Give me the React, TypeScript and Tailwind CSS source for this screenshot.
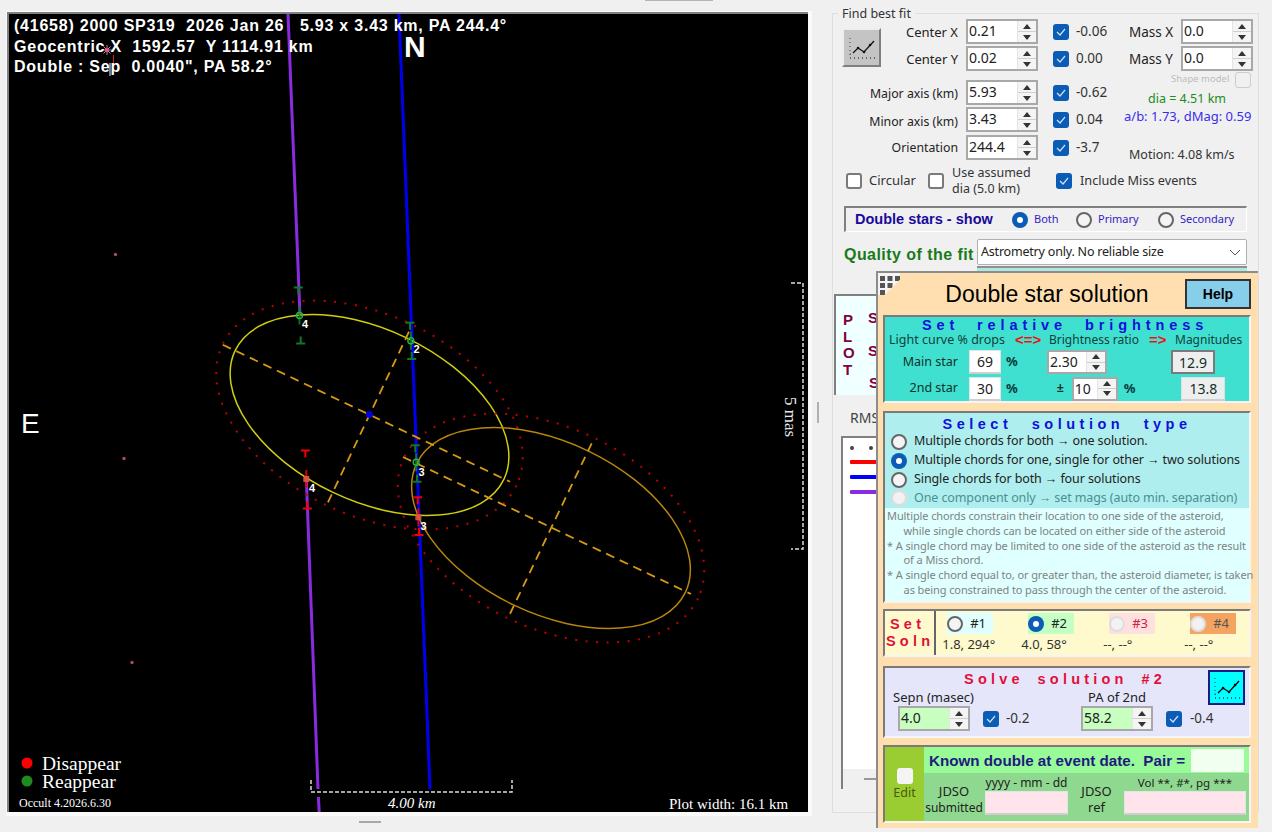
import React from "react";

const ui = "font-['Noto_Sans',sans-serif]";
const arial = "font-['Liberation_Sans',sans-serif]";
const serif = "font-['Liberation_Serif',serif]";

function Spin({ value, w = "w-[72px]", bg = "bg-white", h = "h-[25px]" }: { value: string; w?: string; bg?: string; h?: string }) {
  return (
    <div className={`${w} ${h} ${bg} flex border-2 border-[#a8a8a8] shrink-0`}>
      <div className="flex-1 pl-[1px] text-[14px] leading-[19px] text-[#222]">{value}</div>
      <div className="w-[19px] flex flex-col bg-[#f4f4f4] border-l border-[#e4e4e4]">
        <div className="flex-1 flex items-center justify-center border-b border-[#cfcfcf]">
          <div className="w-0 h-0 border-l-[4px] border-r-[4px] border-b-[5px] border-l-transparent border-r-transparent border-b-[#333]" />
        </div>
        <div className="flex-1 flex items-center justify-center">
          <div className="w-0 h-0 border-l-[4px] border-r-[4px] border-t-[5px] border-l-transparent border-r-transparent border-t-[#333]" />
        </div>
      </div>
    </div>
  );
}

function Check({ on = true, cls = "" }: { on?: boolean; cls?: string }) {
  if (!on)
    return <div className={`w-[16px] h-[16px] rounded-[3px] border-2 border-[#7a7a7a] bg-white shrink-0 ${cls}`} />;
  return (
    <div className={`w-[16px] h-[16px] rounded-[3px] bg-[#0a5cb4] flex items-center justify-center shrink-0 ${cls}`}>
      <svg width="10" height="8" viewBox="0 0 10 8">
        <path d="M1 4 L4 7 L9 1" fill="none" stroke="#cfe2f6" strokeWidth="1.2" />
      </svg>
    </div>
  );
}

function Radio({ on = false, dim = false }: { on?: boolean; dim?: boolean }) {
  if (on)
    return (
      <div className="w-[16px] h-[16px] rounded-full bg-[#0a5cb4] flex items-center justify-center shrink-0">
        <div className="w-[6px] h-[6px] rounded-full bg-white" />
      </div>
    );
  return (
    <div
      className={`w-[16px] h-[16px] rounded-full shrink-0 border-2 ${
        dim ? "border-[#dddddd] bg-[#f2f2f2]" : "border-[#666] bg-[#f4f4f4]"
      }`}
    />
  );
}

function ChartIcon({ dot = "#444", line = "#111" }: { dot?: string; line?: string }) {
  return (
    <svg width="30" height="26" viewBox="0 0 30 26">
      <path d="M3 3 V23 H28" fill="none" stroke={dot} strokeWidth="1" strokeDasharray="1 3" />
      <path d="M3 23 H28 M3 19 H4" fill="none" stroke={dot} strokeWidth="1" strokeDasharray="1 3" />
      <path d="M6 18 L11 13 L17 17 L27 6" fill="none" stroke={line} strokeWidth="1.3" />
      <path d="M11 13h.1M17 17h.1M23 10h.1" stroke={line} strokeWidth="2.5" strokeLinecap="round" />
    </svg>
  );
}

function Chord({ x1, x2, y1, y2, y3, c, marker }: { x1: number; x2: number; y1: number; y2: number; y3: number; c: string; marker: "c" | "s" }) {
  const mid = (x1 + x2) / 2;
  return (
    <g>
      <path d={`M${x1 - 4.5} ${y1} H${x1 + 4.5}`} stroke={c} strokeWidth="2" />
      <path d={`M${x1} ${y1} V${y1 + 7}`} stroke={c} strokeWidth="2" />
      <path d={`M${x2 - 4.5} ${y3} H${x2 + 4.5}`} stroke={c} strokeWidth="2" />
      <path d={`M${x2} ${y3} V${y3 - 7}`} stroke={c} strokeWidth="2" />
      <path d={`M${mid} ${y2 - 9} V${y2 + 9}`} stroke={c} strokeWidth="2" opacity="0.9" />
      {marker === "c" ? (
        <circle cx={mid} cy={y2} r="3" fill="none" stroke="#22b83a" strokeWidth="1.4" />
      ) : (
        <rect x={mid - 3} y={y2 - 3} width="6" height="6" fill="#e05a40" opacity="0.9" />
      )}
    </g>
  );
}

function Plot() {
  const num = "fill-white text-[11px] font-bold";
  return (
    <div className="relative w-[799px] h-[798px] bg-black overflow-hidden">
      <svg className="absolute inset-0" width="799" height="798" viewBox="9 14 799 798">
        {/* chords */}
        <path d="M288 14 L300 316" stroke="#8a2be2" strokeWidth="3" fill="none" />
        <path d="M306.4 480 L318 789 M318.4 797 L319.2 812" stroke="#8a2be2" strokeWidth="3" fill="none" />
        <path d="M399 14 L430 789" stroke="#0000f0" strokeWidth="3" fill="none" />
        {/* outlines */}
        <g transform="rotate(25.6 369.5 415)">
          <ellipse cx="369.5" cy="415" rx="149" ry="85.6" fill="none" stroke="#cfcf10" strokeWidth="1.5" />
          <ellipse cx="369.5" cy="415" rx="163" ry="100" fill="none" stroke="#c00000" strokeWidth="2" strokeDasharray="2 8.5" />
        </g>
        <g transform="rotate(25.6 551 528)">
          <ellipse cx="551" cy="528" rx="149" ry="85.6" fill="none" stroke="#b8860b" strokeWidth="1.5" />
          <ellipse cx="551" cy="528" rx="163" ry="100" fill="none" stroke="#c00000" strokeWidth="2" strokeDasharray="2 8.5" />
        </g>
        <g stroke="#d89a10" strokeWidth="1.8" strokeDasharray="9 6" fill="none">
          <path d="M222.7 344.7 L510 481.7" />
          <path d="M409 331.7 L326.7 505" />
          <path d="M403 457 L691 594" />
          <path d="M591.7 443.3 L508 618" />
        </g>
        <circle cx="369.5" cy="414.5" r="3.5" fill="#0000e0" />

        {/* events */}
        <Chord x1={298.3} x2={300.7} y1={287.5} y2={315.5} y3={343.5} c="#0f7a26" marker="c" />
        <Chord x1={410} x2={411.7} y1={322.7} y2={340.7} y3={359} c="#0f7a26" marker="c" />
        <Chord x1={415.3} x2={417} y1={445.3} y2={462.3} y3={481.7} c="#0f7a26" marker="c" />
        <Chord x1={305.3} x2={307.3} y1={450.5} y2={479} y3={508.5} c="#f00000" marker="s" />
        <Chord x1={417.7} x2={419} y1={497.3} y2={517.3} y3={535} c="#f00000" marker="s" />
        <text x="302" y="328" className={`${num} ${arial}`}>4</text>
        <text x="413.5" y="353" className={`${num} ${arial}`}>2</text>
        <text x="418.5" y="476" className={`${num} ${arial}`}>3</text>
        <text x="309" y="492" className={`${num} ${arial}`}>4</text>
        <text x="420.5" y="530" className={`${num} ${arial}`}>3</text>

        {/* stars */}
        <circle cx="115.5" cy="254.5" r="1.7" fill="#a84a6a" />
        <circle cx="124" cy="458.5" r="1.7" fill="#a84a6a" />
        <circle cx="132" cy="662.5" r="1.7" fill="#a84a6a" />
        <path d="M102 50 H112 M107 45 V55 M103.5 46.5 L110.5 53.5 M110.5 46.5 L103.5 53.5" stroke="#b9859c" strokeWidth="1" />
        <circle cx="107" cy="50" r="1.8" fill="#ff4f9a" />
        <path d="M113.5 55 V63" stroke="#e02020" strokeWidth="1" />
        <path d="M110 63 V76" stroke="#f0f0ff" strokeWidth="1" />

        {/* scale brackets */}
        <path d="M311 780 V792 H512 V780" fill="none" stroke="#ddd" strokeWidth="1.5" strokeDasharray="4 2" />
        <path d="M791 283 H803 V549 H791" fill="none" stroke="#ddd" strokeWidth="1.5" strokeDasharray="4 2" />
        <circle cx="27" cy="763" r="5.5" fill="#ff0000" />
        <circle cx="27" cy="781" r="5.5" fill="#1f8a1f" />
      </svg>

      <div className={`absolute left-[5px] top-[2px] text-white text-[16px] font-bold leading-[20.7px] whitespace-pre tracking-[0.77px] ${arial}`}>
        <div className="w-fit">(41658) 2000 SP319  2026 Jan 26   5.93 x 3.43 km, PA 244.4°</div>
        <div className="w-fit">Geocentric X  1592.57  Y 1114.91 km</div>
        <div className="w-fit">Double : Sep  0.0040", PA 58.2°</div>
      </div>
      <div className={`absolute left-[395px] top-[22px] text-white text-[30px] leading-[22px] font-bold ${arial}`}>N</div>
      <div className={`absolute left-[12px] top-[393px] text-white text-[28px] leading-[34px] ${arial}`}>E</div>
      <div className={`absolute left-[761px] top-[394px] text-[#e8e8e8] text-[17px] leading-[18px] rotate-90 origin-center whitespace-pre ${serif}`}>5 mas</div>
      <div className={`absolute left-[33px] top-[741px] text-white text-[19.5px] leading-[18px] ${serif}`}>
        <div>Disappear</div>
        <div>Reappear</div>
      </div>
      <div className={`absolute left-[10px] top-[782px] text-white text-[12px] leading-[14px] ${serif}`}>Occult 4.2026.6.30</div>
      <div className={`absolute left-[379px] top-[781px] text-white text-[15px] leading-[16px] italic ${serif}`}>4.00 km</div>
      <div className={`absolute left-[660px] top-[782px] text-white text-[15px] leading-[16px] ${serif}`}>Plot width: 16.1 km</div>
    </div>
  );
}

function FitValue({ v }: { v: string }) {
  return (
    <div className="flex items-center gap-[7px] h-[25px] text-[13.5px] text-[#333]">
      <Check />
      <span>{v}</span>
    </div>
  );
}

function Label({ t, cls = "text-[13px] pt-[2px]" }: { t: string; cls?: string }) {
  return <div className={`h-[25px] flex items-center justify-end pr-[8px] text-[#222] whitespace-nowrap ${cls}`}>{t}</div>;
}

function RightPanel() {
  return (
    <div className="relative mt-[13px] ml-[13px] w-[427px] h-[800px] border border-[#dedede] text-[#222]">
      <div className="absolute left-[5px] top-[-9px] bg-[#f0f0f0] px-[4px] text-[12.5px] leading-[17px] text-[#333]">Find best fit</div>
      <div className="grid grid-cols-[52px_80px_87px_76px_52px_72px] grid-rows-[27px_34px_27px_28px_25px] pl-[1px] pt-[5px] items-start">
        <div className="row-span-2 pl-[8px] pt-[9px]">
          <div className="w-[39px] h-[39px] flex items-center justify-center bg-[#c4c4c4] border-2 border-t-[#eeeeee] border-l-[#eeeeee] border-b-[#7f7f7f] border-r-[#7f7f7f]">
            <ChartIcon />
          </div>
        </div>
        <Label t="Center X" />
        <Spin value="0.21" />
        <FitValue v="-0.06" />
        <Label t="Mass X" cls="justify-start pr-0 pt-[2px] text-[13.5px]" />
        <Spin value="0.0" />
        <Label t="Center Y" />
        <Spin value="0.02" />
        <FitValue v="0.00" />
        <Label t="Mass Y" cls="justify-start pr-0 pt-[2px] text-[13.5px]" />
        <Spin value="0.0" />
        <Label t="Major axis (km)" cls="col-span-2 text-[12.3px] pt-[4px]" />
        <Spin value="5.93" />
        <FitValue v="-0.62" />
        <div className="col-span-2 row-span-3 -mt-[9px] flex flex-col items-start">
          <div className="flex items-center h-[17px] w-full">
            <span className="ml-[42px] text-[9.5px] text-[#bdbdbd] whitespace-nowrap w-[56px]">Shape model</span>
            <div className="ml-[8px] w-[16px] h-[16px] rounded-[3px] border border-[#cccccc]" />
          </div>
          <div className="ml-[5px] mt-[2px] text-[12.5px] leading-[17px] text-[#228b22] w-[106px] text-center">dia = 4.51 km</div>
          <div className="-ml-[5px] text-[13px] leading-[18px] text-[#3a2cf0] whitespace-nowrap">a/b: 1.73, dMag: 0.59</div>
          <div className="mt-[21px] text-[12.5px] leading-[17px] text-[#333] whitespace-nowrap">Motion: 4.08 km/s</div>
        </div>
        <Label t="Minor axis (km)" cls="col-span-2 text-[12.3px] pt-[5px]" />
        <Spin value="3.43" />
        <FitValue v="0.04" />
        <Label t="Orientation" cls="col-span-2 text-[12.3px] pt-[2px]" />
        <Spin value="244.4" />
        <FitValue v="-3.7" />
      </div>

      <div className="flex items-center h-[32px] mt-[5px] pl-[13px] text-[13px] text-[#333]">
        <Check on={false} />
        <span className="ml-[7px] w-[59px]">Circular</span>
        <Check on={false} />
        <span className="ml-[8px] w-[103px] text-[12.5px] leading-[16px]">Use assumed<br />dia (5.0 km)</span>
        <Check cls="ml-[1px]" />
        <span className="ml-[8px] text-[12.7px]">Include Miss events</span>
      </div>

      <div className="flex items-center ml-[11px] mt-[9px] w-[403px] h-[26px] border-l-2 border-t-2 border-[#808080] border-b border-r border-b-white border-r-white pl-[9px] text-[12px] text-[#3323c0]">
        <span className={`text-[14.5px] font-bold text-[#1a0a9c] w-[157px] ${arial}`}>Double stars - show</span>
        <Radio on />
        <span className="ml-[6px] w-[42px] text-[11px]">Both</span>
        <Radio />
        <span className="ml-[6px] w-[60px] text-[11px]">Primary</span>
        <Radio />
        <span className="ml-[6px] text-[11px]">Secondary</span>
      </div>

      <div className="flex items-center ml-[11px] mt-[7px] h-[26px]">
        <span className={`text-[16px] font-bold text-[#1a7a1a] w-[133px] tracking-[0.45px] whitespace-nowrap pt-[5px] ${arial}`}>Quality of the fit</span>
        <div className="w-[270px] h-[26px] border border-[#b0b0b0] rounded-[2px] bg-white flex items-center justify-between pl-[3px] pr-[5px] text-[12.5px] tracking-[-0.2px] text-[#222]">
          <span>Astrometry only. No reliable size</span>
          <svg width="12" height="7" viewBox="0 0 12 7">
            <path d="M1 1 L6 6 L11 1" fill="none" stroke="#555" strokeWidth="1" />
          </svg>
        </div>
      </div>
      <div className="ml-[144px] mt-[1px] w-[270px] h-[5px] border-t-2 border-[#909090] bg-[#b0e8e0]" />

      <div className="ml-[1px] mt-[23px] w-[420px] h-[101px] flex border-l-2 border-t-2 border-[#808080] bg-[#f0ffff] text-[#800040] font-bold">
        <div className={`w-[24px] pt-[16px] pl-[7px] text-[15px] leading-[16.5px] ${arial}`}>
          <div>P</div>
          <div>L</div>
          <div>O</div>
          <div>T</div>
        </div>
        <div className={`pl-[8px] pt-[6px] text-[15px] leading-[32.5px] ${arial}`}>
          <div>S</div>
          <div>S</div>
          <div className="pl-[1px]">S</div>
        </div>
      </div>
      <div className="ml-[17px] mt-[14px] text-[14px] leading-[18px] text-[#444]">RMS</div>
      <div className="ml-[8px] mt-[9px] w-[412px] h-[353px] flex flex-col border-l-2 border-t-2 border-[#808080] bg-white">
        <div className="flex-1 pl-[7px] pt-[8px]">
          <div className="flex gap-[15px]">
            <div className="w-[4px] h-[4px] rounded-full bg-[#444]" />
            <div className="w-[4px] h-[4px] rounded-full bg-[#444]" />
          </div>
          <div className="w-[40px] h-[4px] mt-[10px] bg-[#ff0000] rounded-[1px]" />
          <div className="w-[40px] h-[4px] mt-[11px] bg-[#0000ff] rounded-[1px]" />
          <div className="w-[40px] h-[4px] mt-[11px] bg-[#8a2be2] rounded-[1px]" />
        </div>
        <div className="h-[20px] bg-[#f0f0f0] pl-[21px] flex items-center">
          <div className="w-[20px] h-[2px] bg-[#999]" />
        </div>
      </div>
    </div>
  );
}

function Sunken({ cls, children }: { cls: string; children: React.ReactNode }) {
  return (
    <div className={`border-t-2 border-l-2 border-[#7a7a7a] border-b-2 border-r-2 border-b-[#f5f5f5] border-r-[#f5f5f5] ${cls}`}>
      {children}
    </div>
  );
}

function Input({ v, cls = "", h = "h-[24px]" }: { v: string; cls?: string; h?: string }) {
  return (
    <div className={`${h} flex items-center justify-center bg-white border border-[#e4e4e4] border-b-2 border-b-[#cfcfcf] text-[14px] text-[#222] shrink-0 ${cls}`}>{v}</div>
  );
}

const Pct = ({ cls = "" }: { cls?: string }) => <span className={`text-[13px] font-bold text-[#0a3a3a] ${cls}`}>%</span>;

const SOLN = [
  { n: "#1", bg: "bg-[#e0ffff]", val: "1.8, 294°", tc: "text-[#222]", on: false, dim: false, off: "-ml-[5px]" },
  { n: "#2", bg: "bg-[#c4ffc4]", val: "4.0, 58°", tc: "text-[#222]", on: true, dim: false, off: "-ml-[7px]" },
  { n: "#3", bg: "bg-[#ffe0e0]", val: "--, --°", tc: "text-[#d02040]", on: false, dim: true, off: "-ml-[6px]" },
  { n: "#4", bg: "bg-[#f4a460]", val: "--, --°", tc: "text-[#555]", on: false, dim: true, off: "-ml-[6px]" },
];

function SolutionWindow() {
  const title = `font-bold whitespace-nowrap text-center text-[14.5px] leading-[16px] ${arial}`;
  return (
    <div className="absolute left-[876px] top-[271px] w-[382px] h-[557px] bg-[#ffdfb0] border-l-2 border-t-2 border-[#8c8c8c] pl-[5px] pr-[5px] text-[#222]">
      <div className="absolute left-0 top-0 w-[22px] h-[22px] bg-[#f5f5f5] [clip-path:polygon(0_0,100%_0,100%_30%,30%_100%,0_100%)]">
        <svg width="22" height="22" viewBox="0 0 22 22">
          <g fill="#555">
            <rect x="2" y="3" width="5" height="5" />
            <rect x="9.5" y="3" width="5" height="5" />
            <rect x="17" y="3" width="5" height="5" />
            <rect x="2" y="10" width="5" height="5" />
            <rect x="9.5" y="10" width="5" height="5" />
            <rect x="2" y="17" width="5" height="5" />
          </g>
        </svg>
      </div>
      <div className="flex items-center h-[42px]">
        <div className={`w-[302px] pl-[26px] text-center text-[23px] text-black whitespace-nowrap ${arial}`}>Double star solution</div>
        <div className={`w-[66px] h-[30px] flex items-center justify-center bg-[#87ceeb] border-2 border-[#333] text-[14px] font-bold text-black ${arial}`}>Help</div>
      </div>

      <Sunken cls="w-[368px] h-[88px] bg-[#40e0d0]">
        <div className={`${title} pr-[4px] tracking-[4.9px] [word-spacing:9px] text-[#1010d8]`}>Set relative brightness</div>
        <div className="flex items-center h-[14px] text-[12px] text-[#10403a] whitespace-nowrap pl-[4px]">
          <span className="w-[126px] text-[12.5px]">Light curve % drops</span>
          <span className={`w-[34px] font-bold text-[15px] text-[#f01010] ${arial}`}>{"<=>"}</span>
          <span className="w-[100px]">Brightness ratio</span>
          <span className={`w-[26px] font-bold text-[15px] text-[#f01010] ${arial}`}>{"=>"}</span>
          <span>Magnitudes</span>
        </div>
        <div className="flex items-center h-[28px] mt-[1px] text-[12.5px] text-[#10302a]">
          <span className="w-[73px] text-right">Main star</span>
          <Input v="69" cls="ml-[11px] w-[32px]" />
          <Pct cls="ml-[5px] w-[41px]" />
          <Spin value="2.30" w="w-[60px]" h="h-[24px]" />
          <div className="ml-[64px] w-[44px] h-[24px] flex items-center justify-center border-2 border-[#7a7a7a] bg-[#eeeeee] text-[14px]">12.9</div>
        </div>
        <div className="flex items-center h-[25px] text-[12.5px] text-[#10302a]">
          <span className="w-[73px] text-right">2nd star</span>
          <Input v="30" cls="ml-[11px] w-[32px]" />
          <Pct cls="ml-[5px]" />
          <span className="ml-[39px] w-[15px] font-bold">±</span>
          <Spin value="10" w="w-[46px]" h="h-[24px]" />
          <Pct cls="ml-[6px]" />
          <div className="ml-[46px] w-[44px] h-[24px] flex items-center justify-center border border-[#e0e0e0] border-b-2 border-b-[#cfcfcf] bg-[#eeeeee] text-[14px]">13.8</div>
        </div>
      </Sunken>

      <Sunken cls="w-[368px] h-[192px] mt-[8px] bg-[#afeeee] flex flex-col">
        <div className={`${title} tracking-[4.5px] [word-spacing:11px] mt-[3px] text-[#1010d8]`}>Select solution type</div>
        <div className="flex flex-col pl-[6px] text-[12.5px] text-[#222] whitespace-nowrap tracking-[-0.1px]">
          {[
            { t: "Multiple chords for both → one solution.", on: false },
            { t: "Multiple chords for one, single for other → two solutions", on: true },
            { t: "Single chords for both → four solutions", on: false },
          ].map((r) => (
            <div key={r.t} className="flex items-center gap-[7px] h-[19px]">
              <Radio on={r.on} />
              <span>{r.t}</span>
            </div>
          ))}
          <div className="flex items-center gap-[7px] h-[18px] text-[#4a9090]">
            <Radio dim />
            <span>One component only → set mags (auto min. separation)</span>
          </div>
        </div>
        <div className="flex-1 mt-[1px] bg-[#e0ffff] pl-[2px] pt-[1px] text-[11px] leading-[14.8px] text-[#7c8484] whitespace-pre tracking-[-0.1px]">
          <div>Multiple chords constrain their location to one side of the asteroid,</div>
          <div>{"      while single chords can be located on either side of the asteroid"}</div>
          <div>* A single chord may be limited to one side of the asteroid as the result</div>
          <div>{"      of a Miss chord."}</div>
          <div>* A single chord equal to, or greater than, the asteroid diameter, is taken</div>
          <div>{"      as being constrained to pass through the center of the asteroid."}</div>
        </div>
      </Sunken>

      <Sunken cls="w-[368px] h-[48px] mt-[6px] bg-[#fffacd] flex">
        <div className={`w-[52px] border-r-2 border-[#666] text-[14.5px] font-bold leading-[17px] tracking-[4.2px] text-[#e0103a] pt-[5px] pl-[1px] ${arial}`}>
          <div className="pl-[4px]">Set</div>
          <div>Soln</div>
        </div>
        <div className="flex-1 grid grid-cols-[81px_81px_81px_81px] pl-[11px] pt-[2px]">
          {SOLN.map((s) => (
            <div key={s.n} className="flex flex-col">
              <div className={`w-[46px] h-[21px] flex items-center gap-[7px] text-[13px] ${s.bg} ${s.tc}`}>
                <Radio on={s.on} dim={s.dim} />
                <span>{s.n}</span>
              </div>
              <div className={`text-[13px] leading-[21px] text-[#333] whitespace-nowrap ${s.off}`}>{s.val}</div>
            </div>
          ))}
        </div>
      </Sunken>

      <Sunken cls="w-[368px] h-[72px] mt-[9px] bg-[#e6e6fa] flex flex-col relative">
        <div className="flex h-[36px]">
          <div className="flex-1">
            <div className={`${title} pr-[4px] tracking-[4.2px] [word-spacing:5.6px] mt-[3px] text-[#e0103a]`}>Solve solution #2</div>
          </div>
        </div>
        <div className="absolute right-[4px] top-[2px] w-[37px] h-[35px] bg-[#00ffff] border-2 border-[#1a1a80] flex items-center justify-center">
          <ChartIcon dot="#335" line="#000" />
        </div>
        <div className="flex h-[14px] -mt-[13px] items-center text-[13px] text-[#222] whitespace-nowrap">
          <span className="ml-[8px] w-[195px]">Sepn (masec)</span>
          <span>PA of 2nd</span>
        </div>
        <div className="flex items-center mt-[1px] text-[13.5px] text-[#333] h-[25px]">
          <Spin value="4.0" bg="bg-[#c8ffc0]" w="w-[72px] ml-[13px]" />
          <Check cls="ml-[13px]" />
          <span className="ml-[7px] w-[76px]">-0.2</span>
          <Spin value="58.2" bg="bg-[#c8ffc0]" w="w-[72px] ml-[-1px]" />
          <Check cls="ml-[13px]" />
          <span className="ml-[8px]">-0.4</span>
        </div>
      </Sunken>

      <Sunken cls="w-[368px] h-[78px] mt-[7px] bg-[#8fd88f] flex">
        <div className="w-[39px] bg-[#9acd32] flex flex-col items-center pt-[21px] text-[12.5px] text-[#4a5a10]">
          <div className="w-[16px] h-[16px] rounded-[3px] bg-[#f4f4f4]" />
          <div>Edit</div>
        </div>
        <div className="flex-1 flex flex-col">
          <div className="h-[26px] bg-[#98fb98] flex items-center pl-[5px]">
            <span className={`text-[15.2px] font-bold text-[#201a80] whitespace-pre w-[262px] pt-[2px] ${arial}`}>Known double at event date.  Pair =</span>
            <Input v="" cls="w-[53px] !bg-[#f0fff0] !border-[#f0fff0]" h="h-[23px]" />
          </div>
          <div className="flex text-[13px] leading-[16px] text-[#222]">
            <div className="w-[60px] pt-[10px] text-center">JDSO<br /><span className="text-[12px]">submitted</span></div>
            <div className="w-[85px] flex flex-col items-center">
              <span className="text-[12px] h-[18px] pt-[2px] whitespace-nowrap">yyyy - mm - dd</span>
              <Input v="" cls="w-[83px] !bg-[#ffe4ec]" />
            </div>
            <div className="w-[55px] pt-[10px] text-center">JDSO<br />ref</div>
            <div className="w-[122px] flex flex-col items-center">
              <span className="text-[11.5px] h-[18px] pt-[2px] whitespace-nowrap">Vol **, #*, pg ***</span>
              <Input v="" cls="w-[122px] !bg-[#ffe4ec]" />
            </div>
          </div>
        </div>
      </Sunken>
    </div>
  );
}

export default function App() {
  return (
    <div className={`relative w-[1272px] h-[832px] bg-[#f0f0f0] overflow-hidden flex ${ui}`}>
      <div className="absolute left-[645px] top-0 w-[68px] h-[1px] bg-[#b4b4b4]" />
      <div className="w-[812px] pt-[11px] pl-[6px] flex flex-col items-start shrink-0">
        <div className="w-[806px] h-[805px] bg-[#fafafa] pl-[1px] pt-[1px]">
          <div className="border-t-2 border-l-2 border-[#808080] w-[801px] h-[800px]">
            <Plot />
          </div>
        </div>
        <div className="ml-[353px] mt-[5px] w-[22px] h-[2px] bg-[#a8a8a8]" />
      </div>
      <div className="w-[2px] h-[21px] mt-[402px] ml-[5px] bg-[#b0b0b0] shrink-0" />
      <RightPanel />
      <SolutionWindow />
    </div>
  );
}
